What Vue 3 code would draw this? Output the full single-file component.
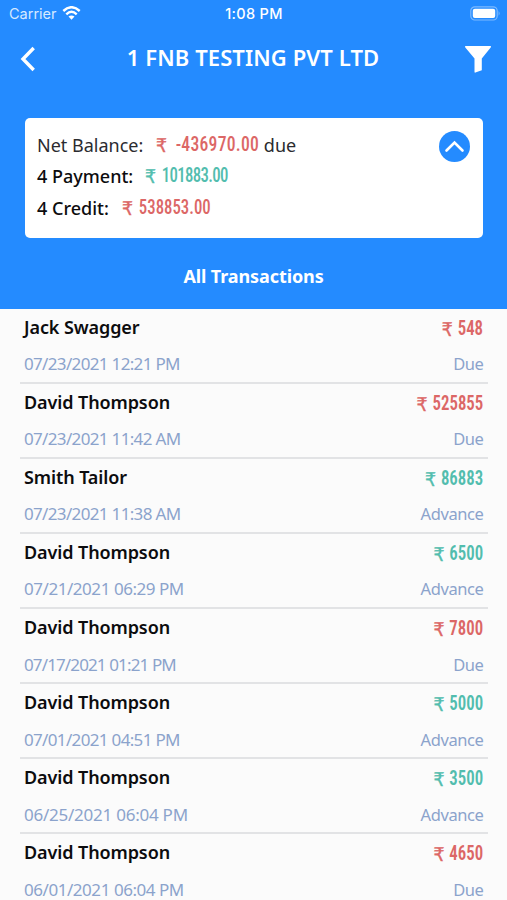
<script setup>
    import { ref } from 'vue';

    const open = ref(true)
    const transactions = ref([
        { name: 'Jack Swagger', date: '07/23/2021 12:21 PM', amount: '548', type: 'Due' },
        { name: 'David Thompson', date: '07/23/2021 11:42 AM', amount: '525855', type: 'Due' },
        { name: 'Smith Tailor', date: '07/23/2021 11:38 AM', amount: '86883', type: 'Advance' },
        { name: 'David Thompson', date: '07/21/2021 06:29 PM', amount: '6500', type: 'Advance' },
        { name: 'David Thompson', date: '07/17/2021 01:21 PM', amount: '7800', type: 'Due' },
        { name: 'David Thompson', date: '07/01/2021 04:51 PM', amount: '5000', type: 'Advance' },
        { name: 'David Thompson', date: '06/25/2021 06:04 PM', amount: '3500', type: 'Advance' },
        { name: 'David Thompson', date: '06/01/2021 06:04 PM', amount: '4650', type: 'Due' }
    ])
    // every digit 1 tightens the date a little
    function tracking(date) {
        const ones = date.split('1').length - 1
        return { letterSpacing: -(ones * 4 + 0.6) / date.length + 'px' }
    }
</script>


<template>
    <div class="page">
        <header class="header">
            <div class="status">
                <div class="carrier">
                    <span>Carrier</span>
                    <svg class="wifi" viewBox="0 0 18 14">
                        <path d="M0.8 5 Q9 -2.6 17.2 5" />
                        <path d="M3.8 8.3 Q9 3.4 14.2 8.3" />
                        <path class="dot" d="M6 10.6 Q9 8.2 12 10.6 L9 13.8 Z" />
                    </svg>
                </div>
                <span class="time">1:08 PM</span>
                <svg class="battery" viewBox="0 0 31 15">
                    <rect class="shell" x="0.8" y="0.8" width="26.4" height="13.2" rx="4" />
                    <rect class="charge" x="2.8" y="2.8" width="22.4" height="9.2" rx="2" />
                    <path class="cap" d="M28.6 5 Q30.6 7.4 28.6 9.8 Z" />
                </svg>
            </div>
            <div class="nav">
                <svg class="back" viewBox="0 0 16 26">
                    <path d="M13.7 2 L3 13 L13.7 24" />
                </svg>
                <h1 class="title">1 FNB TESTING PVT LTD</h1>
                <svg class="filter" viewBox="0 0 28 28">
                    <path d="M1.6 1 H26.4 Q27.6 1.2 26.7 2.4 L17.8 13.6 V25.2 L11.4 27.6 Q10.5 27.8 10.5 26.8 V13.6 L1.3 2.4 Q0.4 1.2 1.6 1 Z" />
                </svg>
            </div>
            <div class="card">
                <div class="lines">
                    <p class="line net"><span class="label">Net Balance:</span><span class="money red"><i class="rupee">₹</i><b>-436970.00</b></span><span class="due">due</span></p>
                    <template v-if="open">
                        <p class="line payment"><span class="label">4 Payment:</span><span class="money green"><i class="rupee">₹</i><b>101883.00</b></span></p>
                        <p class="line"><span class="label">4 Credit:</span><span class="money red"><i class="rupee">₹</i><b>538853.00</b></span></p>
                    </template>
                </div>
                <button class="toggle" @click="open = !open">
                    <svg viewBox="0 0 31 31"><path d="M7.5 19.5 L15.5 11.5 L23.5 19.5" /></svg>
                </button>
            </div>
            <h2 class="subtitle">All Transactions</h2>
        </header>
        <main class="list">
            <div v-for="(item,index) in transactions" :key="index" class="item">
                <div class="row">
                    <span class="name">{{item.name}}</span>
                    <span class="money" :class="item.type === 'Due' ? 'red' : 'green'"><i class="rupee">₹</i><b>{{item.amount}}</b></span>
                </div>
                <div class="row small">
                    <span class="date" :style="tracking(item.date)">{{item.date}}</span>
                    <span class="type">{{item.type}}</span>
                </div>
            </div>
        </main>
    </div>
</template>


<style>
    body{
        margin: 0;
        background: #fbfbfb;
    }
</style>

<style scoped>
    .page{
        height: 900px;
        overflow: hidden;
        background: #fbfbfb;
        font-family: "Noto Sans", "Open Sans", sans-serif;
        color: #0c0c0e;
    }
    .header{
        box-sizing: border-box;
        height: 308.5px;
        background: #248bff;
        color: #fff;
    }
    .status{
        display: grid;
        grid-template-columns: 1fr auto 1fr;
        align-items: center;
        height: 27px;
        padding: 0 6px 0 9px;
        font-family: Inter, sans-serif;
        font-size: 14.5px;
    }
    .carrier{
        display: flex;
        align-items: center;
        gap: 5px;
        color: #d5e9ff;
    }
    .wifi{
        width: 19px;
        height: 14px;
        margin-top: -2px;
        fill: none;
        stroke: #fff;
        stroke-width: 2.4;
    }
    .wifi .dot{
        fill: #fff;
        stroke: none;
    }
    .time{
        margin-right: 2px;
        font-weight: 500;
        letter-spacing: 0.3px;
    }
    .battery{
        justify-self: end;
        width: 31px;
        height: 15px;
    }
    .shell{
        fill: none;
        stroke: #7dbaff;
        stroke-width: 1.2;
    }
    .charge{
        fill: #fff;
    }
    .cap{
        fill: #7dbaff;
    }
    .nav{
        display: flex;
        align-items: center;
        justify-content: space-between;
        height: 64px;
        padding: 0 15px 0 20px;
    }
    .back{
        width: 16px;
        height: 26px;
        fill: none;
        stroke: #fff;
        stroke-width: 3.4;
    }
    .title{
        margin: 0 0 4px 6px;
        font-size: 22px;
        font-weight: 600;
        letter-spacing: 0.1px;
    }
    .filter{
        width: 28px;
        height: 28px;
        fill: #fff;
    }
    .card{
        display: flex;
        justify-content: space-between;
        box-sizing: border-box;
        height: 120px;
        margin: 27px 24.5px 0;
        padding: 11px 12.5px;
        border-radius: 5px;
        background: #fff;
        color: #0c0c0e;
    }
    .line{
        display: flex;
        align-items: center;
        height: 31.5px;
        margin: 0;
        font-size: 18px;
        font-weight: 500;
    }
    .net{
        color: #2b2b2f;
        font-weight: 400;
    }
    .label{
        margin-right: 14px;
    }
    .payment .label{
        margin-right: 12.5px;
    }
    .due{
        margin-left: -15px;
    }
    .toggle{
        width: 31px;
        height: 31px;
        margin-top: 1.5px;
        padding: 0;
        border: none;
        border-radius: 50%;
        background: #248bff;
        cursor: pointer;
    }
    .toggle svg{
        display: block;
        fill: none;
        stroke: #fff;
        stroke-width: 2.6;
        stroke-linecap: round;
    }
    .subtitle{
        margin: 23px 0 0;
        font-size: 18px;
        line-height: 30px;
        text-align: center;
        font-weight: 700;
        letter-spacing: -0.1px;
    }
    .item{
        box-sizing: border-box;
        height: 75.15px;
        margin: 0 19px 0 20px;
        padding: 0 4.5px 0 4px;
        border-bottom: 2px solid #e2e3e5;
    }
    .row{
        display: flex;
        align-items: center;
        justify-content: space-between;
        height: 36px;
    }
    .name{
        font-size: 18px;
        font-weight: 600;
        letter-spacing: -0.1px;
    }
    .small{
        margin-top: 1px;
        color: #8ba3cc;
        font-size: 17px;
    }
    .type{
        font-size: 16.5px;
        letter-spacing: -0.4px;
    }
    /* condensed figures */
    .money{
        display: flex;
        align-items: center;
        gap: 7px;
        font-family: Roboto, sans-serif;
        font-size: 20px;
        line-height: 24px;
        font-stretch: 75%;
        transform: scaleX(0.84);
        transform-origin: left;
    }
    .item .money{
        margin-top: 2px;
        transform-origin: right;
    }
    .line .money{
        gap: 8px;
        margin-top: -2px;
    }
    .net .money{
        gap: 11px;
        font-size: 21px;
        letter-spacing: 0.3px;
    }
    .money b{
        font-weight: 600;
    }
    .line b{
        font-weight: 550;
    }
    .payment b{
        letter-spacing: -0.8px;
    }
    .rupee{
        margin-top: 2px;
        font-family: "DejaVu Sans", sans-serif;
        font-size: 19px;
        font-style: normal;
        -webkit-text-stroke: 0.4px currentColor;
        transform: scaleX(1.2);
    }
    .red{
        color: #dc6766;
    }
    .green{
        color: #52bdae;
    }
</style>
